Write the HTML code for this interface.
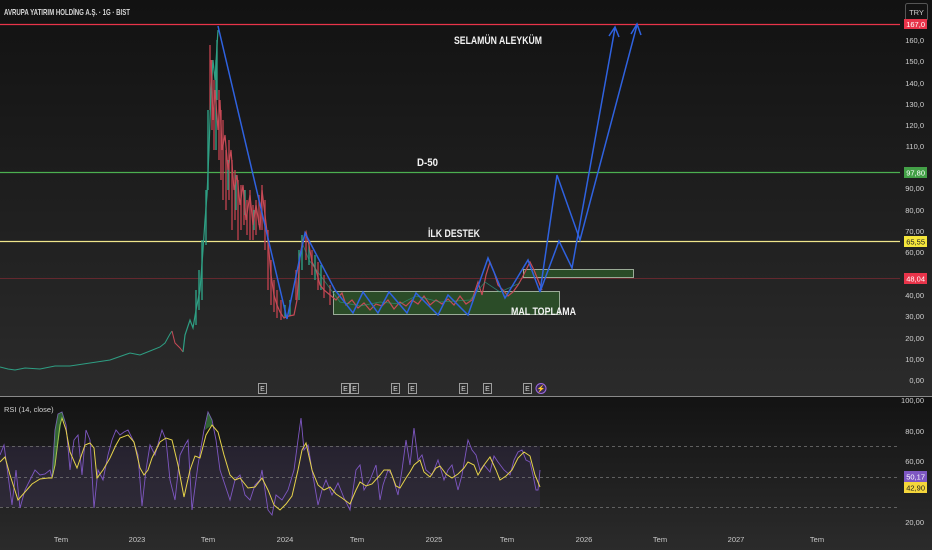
<!DOCTYPE html>
<html><head><meta charset="utf-8"><style>
html,body{margin:0;padding:0;width:932px;height:550px;overflow:hidden;background:#1c1c1c}
svg{display:block}
text{font-family:"Liberation Sans",sans-serif}
</style></head><body>
<svg width="932" height="550" viewBox="0 0 932 550" xmlns="http://www.w3.org/2000/svg">
<defs>
<linearGradient id="bg" x1="0" y1="0" x2="0" y2="1"><stop offset="0" stop-color="#121212"/><stop offset="1" stop-color="#2b2b2b"/></linearGradient>
<linearGradient id="bg2" x1="0" y1="0" x2="0" y2="1"><stop offset="0" stop-color="#131313"/><stop offset="1" stop-color="#2b2b2b"/></linearGradient>
</defs>
<rect x="0" y="0" width="932" height="396" fill="url(#bg)"/>
<rect x="0" y="397" width="932" height="153" fill="url(#bg2)"/>
<line x1="0" y1="396.5" x2="932" y2="396.5" stroke="#8a8a8a" stroke-width="1"/>

<text x="4" y="15" fill="#d8d8d8" font-size="8.5" font-weight="bold" textLength="126" lengthAdjust="spacingAndGlyphs">AVRUPA YATIRIM HOLDİNG A.Ş. · 1G · BIST</text>
<rect x="905.5" y="3.5" width="22" height="17" rx="2" fill="none" stroke="#555"/>
<text x="916.5" y="15" fill="#ccc" font-size="7.5" text-anchor="middle">TRY</text>

<line x1="0" y1="24.5" x2="900" y2="24.5" stroke="#e8344a" stroke-width="1.3"/>
<line x1="0" y1="172.5" x2="900" y2="172.5" stroke="#4caf50" stroke-width="1.3"/>
<line x1="0" y1="241.5" x2="900" y2="241.5" stroke="#f0e68c" stroke-width="1.3"/>
<line x1="0" y1="278.5" x2="900" y2="278.5" stroke="#7a2a32" stroke-width="0.8"/>

<rect x="333.5" y="291.5" width="226" height="23" fill="#2e5a2a" fill-opacity="0.75" stroke="#b8c9b4" stroke-width="0.8"/>
<rect x="523.5" y="269.5" width="110" height="8" fill="#2e5a2a" fill-opacity="0.75" stroke="#b8c9b4" stroke-width="0.8"/>

<!-- candle texture -->
<g stroke-width="1.4">
<path stroke="#b8404c" d="M210,45V110 M212,60V130 M214,80V150 M219,90V160 M221,110V180 M223,120V200 M226,150V210 M229,140V200 M232,160V230 M235,170V220 M238,180V240 M241,185V230 M244,190V225 M247,200V235 M250,190V240 M253,205V240 M256,200V235 M259,195V225 M262,185V230 M265,200V250 M268,230V290 M271,260V305 M274,280V312 M277,290V318 M281,300V320 M296,270V300 M306,235V260 M312,250V275 M318,262V290 M324,275V298 M330,285V305"/>
<path stroke="#2e9e83" d="M206,190V245 M208,110V190 M216,60V150 M217,40V100 M228,160V190 M236,175V210 M245,190V215 M254,210V230 M285,305V318 M290,300V316 M299,250V300 M302,235V270 M309,240V265 M315,255V280 M321,265V290 M202,240V300 M199,270V310 M196,290V325"/>
</g>
<polyline fill="none" stroke="#2e9e83" stroke-width="1" points="0,367 8,369 15,370 25,368 40,369 55,366 70,366 90,363 110,360 130,353 140,355 150,351 160,347 165,343 170,334 172,331"/>
<polyline fill="none" stroke="#c64a56" stroke-width="1" points="172,331 175,343 180,348 183,352"/>
<polyline fill="none" stroke="#2e9e83" stroke-width="1.2" points="183,352 185,335 190,320 193,328 196,310 200,290 203,250 205,220 207,195 209,150 211,90 213,60 215,80 217,45 218,30"/>
<polyline fill="none" stroke="#c64a56" stroke-width="1.2" points="211,60 213,120 215,90 218,130 220,100 222,150 225,135 228,170 231,150 234,190 237,175 240,205 243,185 246,220 250,195 253,225 256,205 260,230 262,190 265,215 268,240 271,275 274,295 277,305 280,312 284,318 289,316 294,315 297,300 300,255 303,240 306,232 309,245 312,262 316,270 320,285 324,290 330,295 336,300 342,293 346,305 352,300 358,308 364,303 370,310 376,304 382,306 388,300 394,309 400,302 406,306 412,300 418,304 424,296 430,305 436,300 442,304 448,299 454,305 460,296 466,304 472,300 478,282 482,295 486,275 490,262 494,272 498,285 503,290 508,296 513,292 518,285 522,278 526,270 530,262 534,270 538,280 542,290"/>
<polyline fill="none" stroke="#2e9e83" stroke-width="0.8" opacity="0.7" points="300,255 303,245 309,260 340,302 360,306 380,302 400,304 416,296 440,302 470,300 485,282 500,292 520,283"/>

<g fill="none" stroke="#2f62e0" stroke-width="1.5" stroke-linejoin="miter">
<polyline points="218,26 287,319 305,233 335,290 353,313 363,292 378,313 389,292 407,313 416,293 438,315 448,295 468,315 488,258 505,298 528,260 540,292 557,175 580,240 637,25"/>
<polyline points="540,292 559,241 572,268 615,28"/>
<polyline points="609,36 615,27 619,37"/>
<polyline points="631,34 637,24 641,35"/>
</g>

<g fill="#f2f2f2" font-size="11" font-weight="bold">
<text x="454" y="44" textLength="88" lengthAdjust="spacingAndGlyphs">SELAMÜN ALEYKÜM</text>
<text x="417" y="166" textLength="21" lengthAdjust="spacingAndGlyphs">D-50</text>
<text x="428" y="237" textLength="52" lengthAdjust="spacingAndGlyphs">İLK DESTEK</text>
<text x="511" y="315" textLength="65" lengthAdjust="spacingAndGlyphs">MAL TOPLAMA</text>
</g>

<g font-size="7" fill="#ddd" text-anchor="middle">
<g fill="none" stroke="#bbb" stroke-width="0.8">
<rect x="258.5" y="383.5" width="8" height="10"/><rect x="341.5" y="383.5" width="8" height="10"/><rect x="350.5" y="383.5" width="8" height="10"/>
<rect x="391.5" y="383.5" width="8" height="10"/><rect x="408.5" y="383.5" width="8" height="10"/><rect x="459.5" y="383.5" width="8" height="10"/>
<rect x="483.5" y="383.5" width="8" height="10"/><rect x="523.5" y="383.5" width="8" height="10"/>
</g>
<text x="262.5" y="391">E</text><text x="345.5" y="391">E</text><text x="354.5" y="391">E</text><text x="395.5" y="391">E</text><text x="412.5" y="391">E</text><text x="463.5" y="391">E</text><text x="487.5" y="391">E</text><text x="527.5" y="391">E</text>
<circle cx="541" cy="388.5" r="5" fill="#3a2a55" stroke="#9c6ade"/>
<text x="541" y="391" fill="#c9a6ff" font-size="7">⚡</text>
</g>

<g fill="#d0d0d0" font-size="7.5" text-anchor="end">
<text x="924" y="43">160,0</text><text x="924" y="64">150,0</text><text x="924" y="86">140,0</text><text x="924" y="107">130,0</text><text x="924" y="128">120,0</text><text x="924" y="149">110,0</text>
<text x="924" y="191">90,00</text><text x="924" y="213">80,00</text><text x="924" y="234">70,00</text><text x="924" y="255">60,00</text><text x="924" y="298">40,00</text><text x="924" y="319">30,00</text><text x="924" y="341">20,00</text><text x="924" y="362">10,00</text><text x="924" y="383">0,00</text>
<text x="924" y="403">100,00</text><text x="924" y="434">80,00</text><text x="924" y="464">60,00</text><text x="924" y="525">20,00</text>
</g>
<rect x="904" y="19" width="23" height="10" fill="#e8344a"/><text x="925" y="27" fill="#fff" font-size="7.5" text-anchor="end">167,0</text>
<rect x="904" y="167" width="23" height="11" fill="#43a047"/><text x="925" y="175.5" fill="#fff" font-size="7.5" text-anchor="end">97,80</text>
<rect x="904" y="236" width="23" height="11" fill="#f5e63b"/><text x="925" y="244.5" fill="#222" font-size="7.5" text-anchor="end">65,55</text>
<rect x="904" y="273" width="23" height="11" fill="#e8344a"/><text x="925" y="281.5" fill="#fff" font-size="7.5" text-anchor="end">48,04</text>
<rect x="904" y="471" width="23" height="11" fill="#7e57c2"/><text x="925" y="479.5" fill="#fff" font-size="7.5" text-anchor="end">50,17</text>
<rect x="904" y="482" width="23" height="11" fill="#f5d63b"/><text x="925" y="490.5" fill="#222" font-size="7.5" text-anchor="end">42,90</text>

<text x="4" y="412" fill="#d0d0d0" font-size="7.5">RSI (14, close)</text>
<rect x="0" y="446" width="540" height="61" fill="#7e57c2" fill-opacity="0.12"/>
<g stroke="#777" stroke-dasharray="3,3" stroke-width="0.8">
<line x1="0" y1="446.5" x2="900" y2="446.5"/><line x1="0" y1="477.5" x2="900" y2="477.5"/><line x1="0" y1="507.5" x2="900" y2="507.5"/>
</g>
<polyline fill="none" stroke="#7e57c2" stroke-width="0.9" points="0,455 4,445 8,475 12,505 16,470 20,508 25,490 30,480 35,470 40,475 45,474 50,470 52,478 55,430 58,414 62,412 66,425 70,470 74,440 78,435 82,475 86,430 90,440 94,508 98,470 103,480 108,455 112,440 116,430 120,435 124,432 128,430 133,440 138,455 142,506 146,470 150,445 155,455 162,430 166,440 170,480 175,500 180,455 185,445 188,440 192,510 198,465 204,430 208,412 212,420 216,440 220,470 225,485 230,500 235,480 240,475 245,495 250,500 255,485 260,480 262,470 268,510 272,515 276,495 282,500 288,490 294,470 298,440 301,418 304,450 308,445 312,470 318,505 322,490 326,480 332,495 338,483 344,498 350,510 356,470 360,465 364,490 370,480 376,465 380,500 383,485 388,470 392,475 398,495 402,470 406,440 410,465 414,428 418,460 422,455 426,470 432,475 438,460 444,480 448,470 452,465 458,490 462,475 468,440 472,450 476,455 480,470 484,465 490,472 494,456 498,462 504,470 510,475 514,460 518,452 522,450 526,460 530,462 533,475 536,490 538,490 540,470"/>
<polyline fill="none" stroke="#e6d34a" stroke-width="1" points="0,462 5,457 10,475 18,500 25,492 32,484 40,479 48,478 52,478 55,465 60,425 62,418 66,430 70,452 77,468 85,445 90,443 94,448 97,478 103,470 110,458 116,445 120,438 128,435 134,442 140,468 144,475 148,470 152,458 160,442 166,438 172,440 178,465 184,497 190,470 195,456 200,458 206,435 212,425 218,432 224,455 230,475 235,480 240,478 248,488 255,487 262,478 268,490 274,505 280,510 286,504 292,496 298,470 302,450 306,443 312,470 318,485 324,490 330,487 336,494 342,498 350,504 356,490 360,482 366,486 372,484 380,475 384,470 390,470 396,486 400,488 406,478 410,472 414,465 420,460 424,472 430,477 436,468 440,466 446,474 452,478 458,474 464,468 468,462 474,465 478,475 484,465 490,457 496,470 500,480 506,476 512,470 518,458 524,452 530,456 535,475 540,487"/>
<path d="M52,478 L55,430 L58,414 L62,412 L66,425 L62,418 L55,465 Z M205,430 L208,412 L212,420 L212,425 Z" fill="#4caf50" opacity="0.5"/>

<g fill="#c8c8c8" font-size="7.5" text-anchor="middle">
<text x="61" y="542">Tem</text><text x="137" y="542">2023</text><text x="208" y="542">Tem</text><text x="285" y="542">2024</text><text x="357" y="542">Tem</text><text x="434" y="542">2025</text><text x="507" y="542">Tem</text><text x="584" y="542">2026</text><text x="660" y="542">Tem</text><text x="736" y="542">2027</text><text x="817" y="542">Tem</text>
</g>
</svg>
</body></html>
